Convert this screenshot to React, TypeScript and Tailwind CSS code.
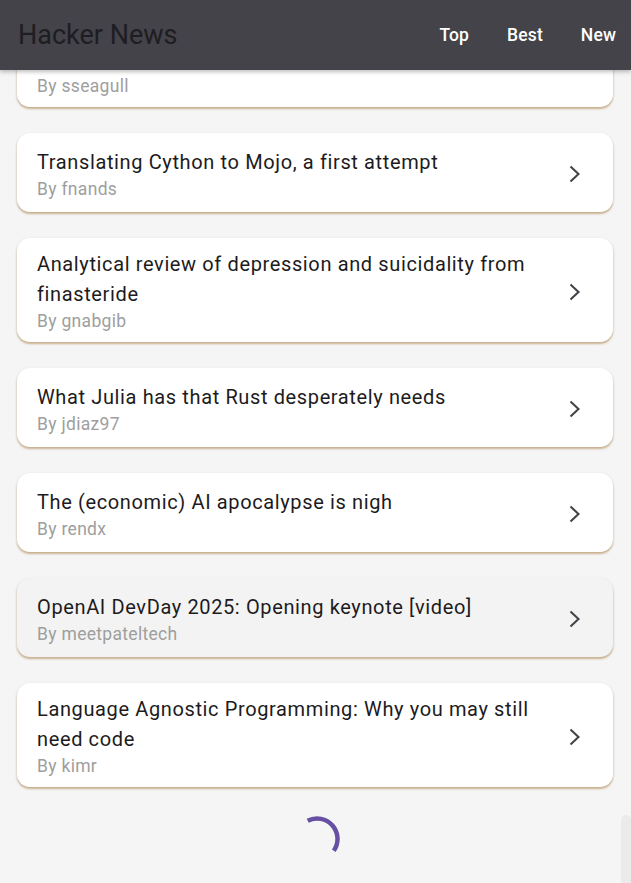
import React from "react";

type Story = { title: string; by: string; hover?: boolean; hidden?: boolean };

const stories: Story[] = [
  { title: "", by: "sseagull", hidden: true },
  { title: "Translating Cython to Mojo, a first attempt", by: "fnands" },
  { title: "Analytical review of depression and suicidality from finasteride", by: "gnabgib" },
  { title: "What Julia has that Rust desperately needs", by: "jdiaz97" },
  { title: "The (economic) AI apocalypse is nigh", by: "rendx" },
  { title: "OpenAI DevDay 2025: Opening keynote [video]", by: "meetpateltech", hover: true },
  { title: "Language Agnostic Programming: Why you may still need code", by: "kimr" },
];

function Chevron() {
  return (
    <svg width="12" height="18" viewBox="0 0 12 18" fill="none">
      <polyline points="1.5,1.5 9.5,9 1.5,16.5" stroke="#45434a" strokeWidth="2.1" strokeLinejoin="miter" />
    </svg>
  );
}

function Card({ s }: { s: Story }) {
  return (
    <div
      className={`flex min-h-[79px] items-center rounded-[13px] pl-[20px] pr-[32px] pt-[11px] pb-[8px] shadow-[0_2px_2px_rgba(180,132,68,0.5),0_1px_3px_rgba(0,0,0,0.12)] ${
        s.hover ? "bg-[#f3f3f3]" : "bg-white"
      }`}
    >
      <div className="flex min-w-0 flex-1 flex-col pr-[28px]">
        {s.hidden ? (
          <div className="h-[60px]" />
        ) : (
          <div className="text-[20px] leading-[30px] tracking-[0.625px] text-[#1d1b20]">{s.title}</div>
        )}
        <div className="text-[17.5px] leading-[25px] tracking-[0.31px] text-[#9e9e9e]">By {s.by}</div>
      </div>
      <div className="flex w-[12px] items-center justify-center">
        <Chevron />
      </div>
    </div>
  );
}

function Spinner() {
  return (
    <svg width="46" height="46" viewBox="0 0 46 46" fill="none">
      <path d="M13.69 4.73 A20.5 20.5 0 0 1 39.79 34.77" stroke="#6750a4" strokeWidth="4.5" strokeLinecap="butt" />
    </svg>
  );
}

export default function App() {
  return (
    <div
      className="relative h-[883px] w-full overflow-hidden bg-[#f5f5f5]"
      style={{ fontFamily: "Roboto, 'Noto Sans', sans-serif" }}
    >
      <header className="absolute left-0 right-0 top-0 z-10 flex h-[70px] items-center justify-between bg-[#444349] pl-[18px] pr-[15px] shadow-[0_2px_4px_rgba(0,0,0,0.25)]">
        <div className="text-[27px] font-normal text-[#1e1d22]">Hacker News</div>
        <nav className="flex items-center gap-[38px] text-[17.5px] font-medium tracking-[0.125px] text-white">
          <span>Top</span>
          <span>Best</span>
          <span>New</span>
        </nav>
      </header>

      <main className="flex flex-col gap-[26px] pl-[17px] pr-[18px] pt-[3px]">
        {stories.map((s) => (
          <Card key={s.by} s={s} />
        ))}
        <div className="flex justify-center pl-[4px] pt-[3px]">
          <Spinner />
        </div>
      </main>

      <div className="absolute bottom-0 right-0 top-[815px] w-[10px] rounded-t-[5px] bg-[#ebebeb]" />
    </div>
  );
}
